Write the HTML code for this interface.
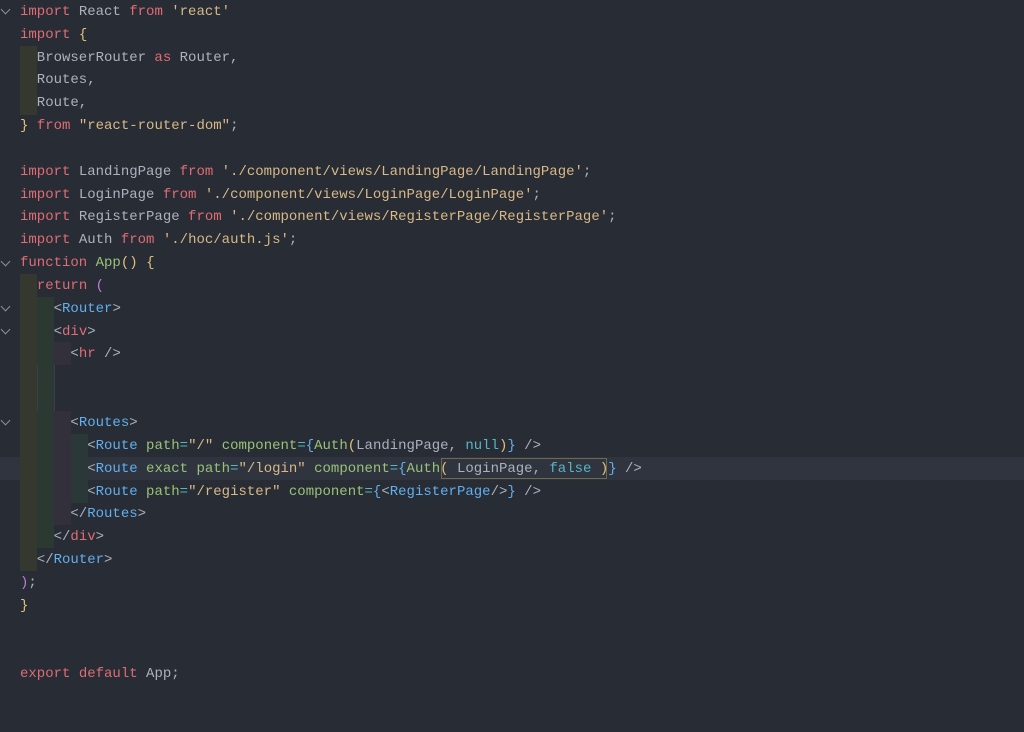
<!DOCTYPE html>
<html><head><meta charset="utf-8"><style>
body{margin:0;width:1024px;height:732px;background:#282c34;overflow:hidden;position:relative;font-family:"Liberation Mono","Noto Sans CJK KR",monospace;font-size:14px;}
.l{position:absolute;left:20px;height:23px;line-height:25px;white-space:pre;color:#abb2bf;}
.k{color:#e06c75}.s{color:#d8b987}.y{color:#e5c07b}.b{color:#61afef}.g{color:#98c379}.c{color:#56b6c2}.o{color:#c678dd}.r{color:#e06c75}.f{color:#98c379}
.gd{position:absolute;}
.cv{position:absolute;left:2px;width:6px;height:6px;border-right:1px solid #8a8f98;border-bottom:1px solid #8a8f98;transform:rotate(45deg);}
</style></head><body>
<div style="position:absolute;left:0;top:457px;width:1024px;height:23px;background:#2f343f"></div>
<div class="gd" style="left:20px;top:46px;width:17px;height:69px;background:#35382e"></div>
<div class="gd" style="left:20px;top:274px;width:17px;height:297px;background:#35382e"></div>
<div class="gd" style="left:37px;top:297px;width:17px;height:251px;background:#2c3832"></div>
<div class="gd" style="left:54px;top:342px;width:17px;height:23px;background:#33303b"></div>
<div class="gd" style="left:54px;top:411px;width:17px;height:114px;background:#33303b"></div>
<div class="gd" style="left:71px;top:434px;width:17px;height:69px;background:#2b3838"></div>
<div class="gd" style="left:37px;top:365px;width:1px;height:46px;background:#3a3f48"></div>
<div class="gd" style="left:54px;top:365px;width:1px;height:46px;background:#3a3f48"></div>
<div style="position:absolute;left:441px;top:458px;width:166px;height:21px;border:1px solid #6b6a4a;box-sizing:border-box"></div>
<div class="cv" style="top:6px"></div>
<div class="cv" style="top:258px"></div>
<div class="cv" style="top:303px"></div>
<div class="cv" style="top:326px"></div>
<div class="cv" style="top:417px"></div>
<div class="l" style="top:0px"><span class="k">import</span> React <span class="k">from</span> <span class="s">'react'</span></div>
<div class="l" style="top:23px"><span class="k">import</span> <span class="y">{</span></div>
<div class="l" style="top:46px">  BrowserRouter <span class="k">as</span> Router,</div>
<div class="l" style="top:68px">  Routes,</div>
<div class="l" style="top:91px">  Route,</div>
<div class="l" style="top:114px"><span class="y">}</span> <span class="k">from</span> <span class="s">"react-router-dom"</span>;</div>
<div class="l" style="top:160px"><span class="k">import</span> LandingPage <span class="k">from</span> <span class="s">'./component/views/LandingPage/LandingPage'</span>;</div>
<div class="l" style="top:183px"><span class="k">import</span> LoginPage <span class="k">from</span> <span class="s">'./component/views/LoginPage/LoginPage'</span>;</div>
<div class="l" style="top:205px"><span class="k">import</span> RegisterPage <span class="k">from</span> <span class="s">'./component/views/RegisterPage/RegisterPage'</span>;</div>
<div class="l" style="top:228px"><span class="k">import</span> Auth <span class="k">from</span> <span class="s">'./hoc/auth.js'</span>;</div>
<div class="l" style="top:251px"><span class="k">function</span> <span class="f">App</span><span class="y">()</span> <span class="y">{</span></div>
<div class="l" style="top:274px">  <span class="k">return</span> <span class="o">(</span></div>
<div class="l" style="top:297px">    &lt;<span class="b">Router</span>&gt;</div>
<div class="l" style="top:320px">    &lt;<span class="r">div</span>&gt;</div>
<div class="l" style="top:342px">      &lt;<span class="r">hr</span> /&gt;</div>
<div class="l" style="top:411px">      &lt;<span class="b">Routes</span>&gt;</div>
<div class="l" style="top:434px">        &lt;<span class="b">Route</span> <span class="g">path</span><span class="c">=</span><span class="s">"/"</span> <span class="g">component</span><span class="c">=</span><span class="b">{</span><span class="f">Auth</span><span class="y">(</span>LandingPage, <span class="c">null</span><span class="y">)</span><span class="b">}</span> /&gt;</div>
<div class="l" style="top:457px">        &lt;<span class="b">Route</span> <span class="g">exact</span> <span class="g">path</span><span class="c">=</span><span class="s">"/login"</span> <span class="g">component</span><span class="c">=</span><span class="b">{</span><span class="f">Auth</span><span class="y">(</span> LoginPage, <span class="c">false</span> <span class="y">)</span><span class="b">}</span> /&gt;</div>
<div class="l" style="top:480px">        &lt;<span class="b">Route</span> <span class="g">path</span><span class="c">=</span><span class="s">"/register"</span> <span class="g">component</span><span class="c">=</span><span class="b">{</span>&lt;<span class="b">RegisterPage</span>/&gt;<span class="b">}</span> /&gt;</div>
<div class="l" style="top:502px">      &lt;/<span class="b">Routes</span>&gt;</div>
<div class="l" style="top:525px">    &lt;/<span class="r">div</span>&gt;</div>
<div class="l" style="top:548px">  &lt;/<span class="b">Router</span>&gt;</div>
<div class="l" style="top:571px"><span class="o">)</span>;</div>
<div class="l" style="top:594px"><span class="y">}</span></div>
<div class="l" style="top:662px"><span class="k">export</span> <span class="k">default</span> App;</div>
</body></html>
